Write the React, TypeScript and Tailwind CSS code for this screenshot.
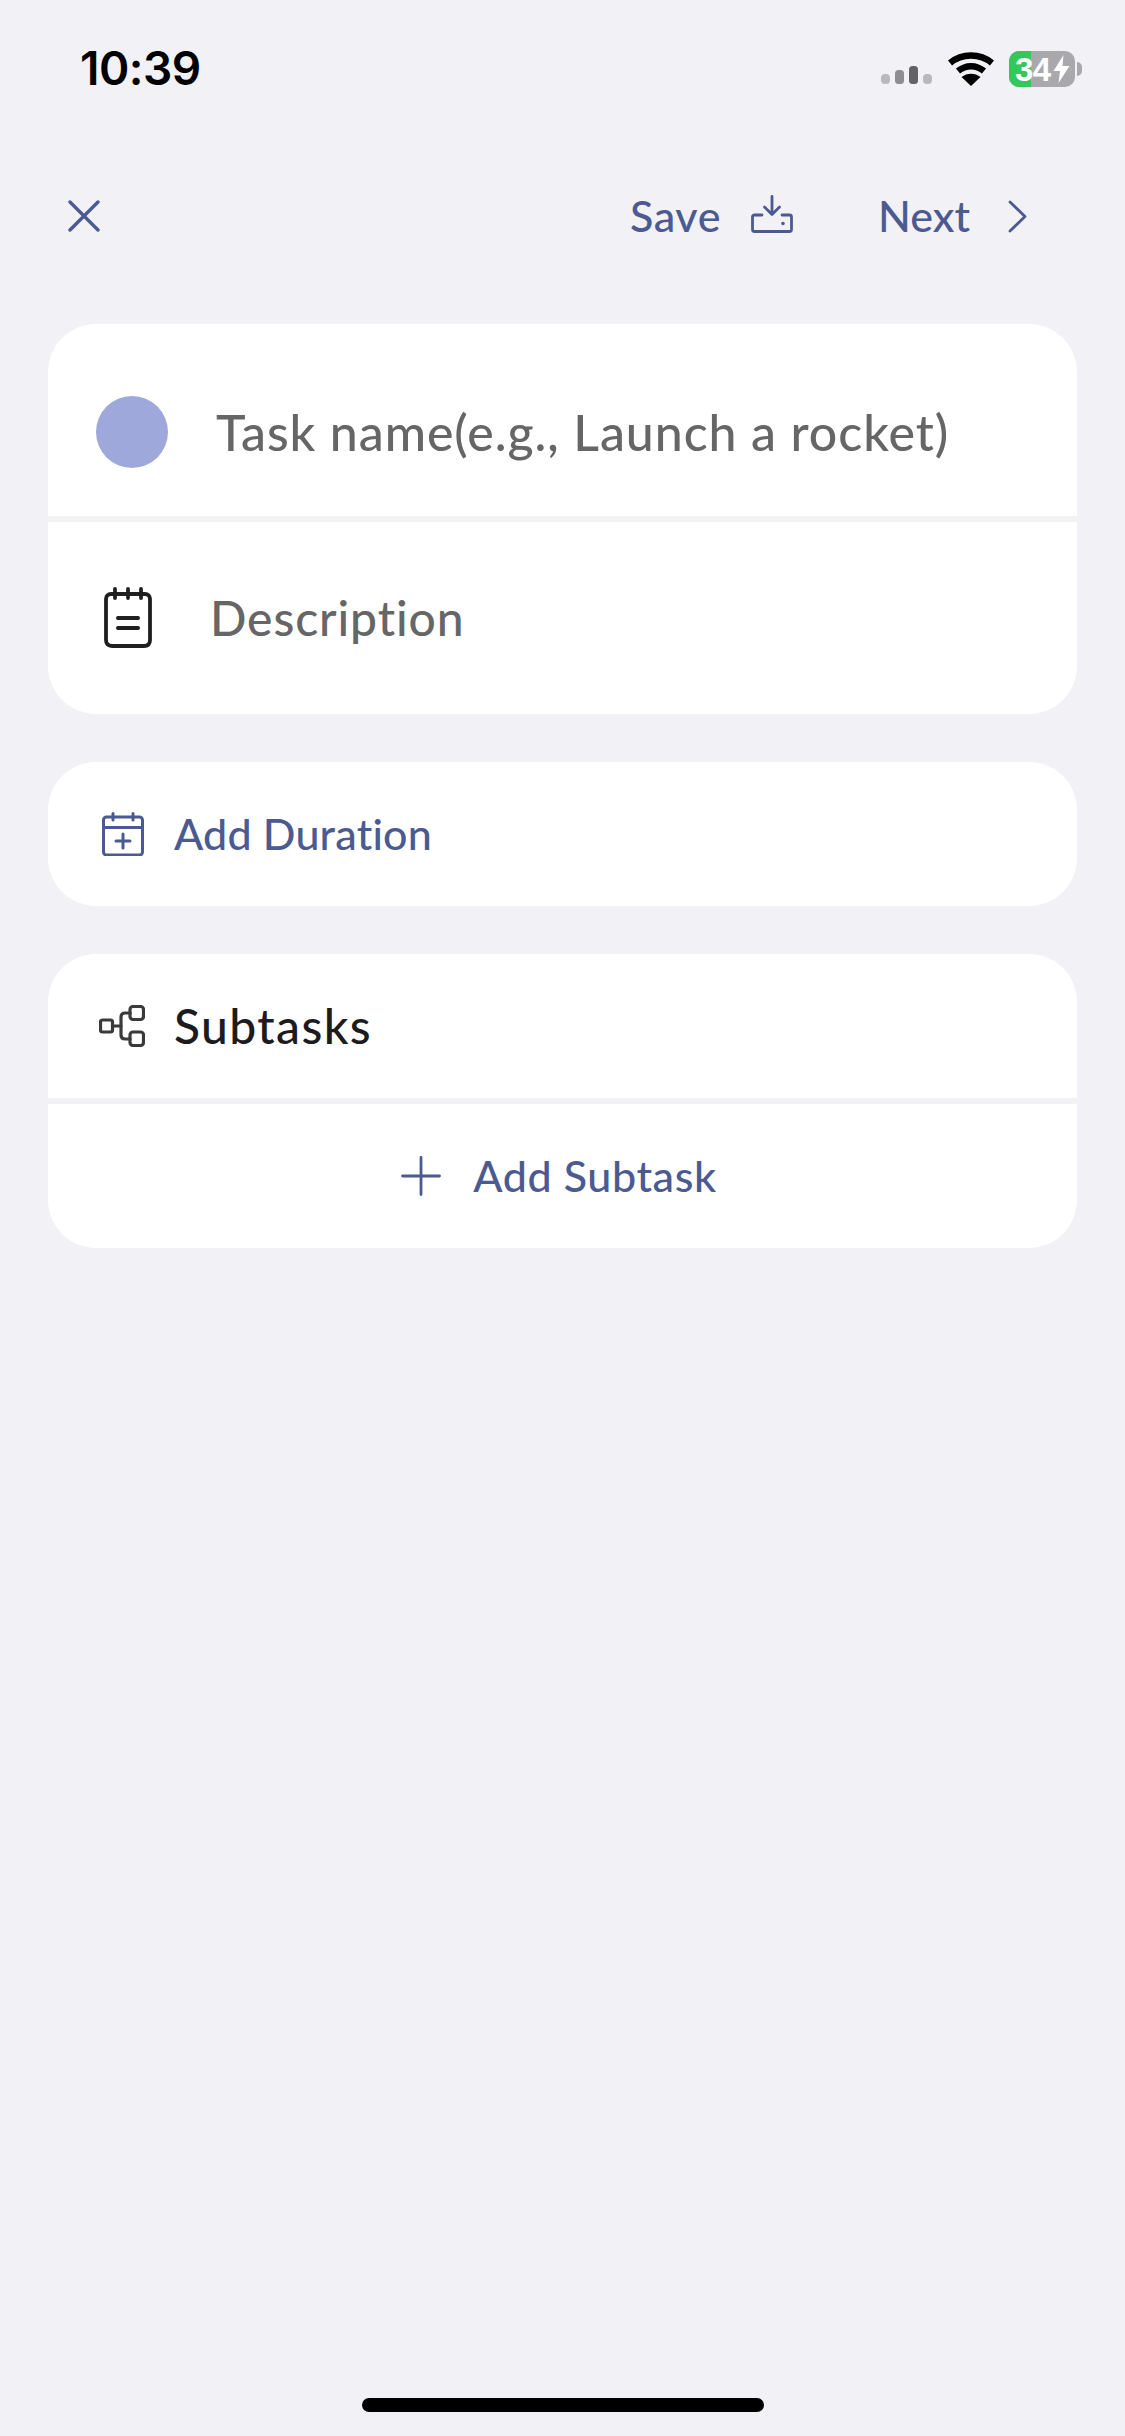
import React from "react";

const FONT = "font-['Lato','Noto_Sans',sans-serif]";

function Signal() {
  return (
    <svg width="52" height="20" viewBox="0 0 52 20" className="block">
      <rect x="0" y="8" width="9" height="10" rx="4" fill="#b9b9bd" />
      <rect x="14" y="4" width="9" height="14" rx="3.5" fill="#8e8e92" />
      <rect x="28" y="0" width="9" height="18" rx="3.5" fill="#636366" />
      <rect x="42" y="8" width="9" height="10" rx="4" fill="#b9b9bd" />
    </svg>
  );
}

function Wifi() {
  return (
    <svg width="46" height="34" viewBox="0 0 46 34" className="block">
      <path d="M2 11 C14 1 32 1 44 11" fill="none" stroke="#000" strokeWidth="6.5" />
      <path d="M10 19 C18 12.5 28 12.5 36 19" fill="none" stroke="#000" strokeWidth="6.5" />
      <path d="M23 34 L13.5 25 C19 20.5 27 20.5 32.5 25 Z" fill="#000" />
    </svg>
  );
}

function Battery() {
  return (
    <div className="flex items-center">
      <div className="relative flex h-[36px] w-[66px] items-center overflow-hidden rounded-[10px] bg-[#a9a9ad]">
        <div className="absolute inset-y-0 left-0 w-[22px] bg-[#34c759]" />
        <span className="relative ml-[6px] font-['Liberation_Sans',sans-serif] text-[33px] leading-none font-bold tracking-[-0.5px] text-white">
          34
        </span>
        <svg width="17" height="28" viewBox="0 0 16 28" className="relative ml-[2px] block">
          <path d="M10 0 L0 16 H6.5 L5 28 L16 11 H9 Z" fill="#fff" />
        </svg>
      </div>
      <div className="ml-[2px] h-[14px] w-[5px] rounded-r-full bg-[#a9a9ad]" />
    </div>
  );
}

function CloseIcon() {
  return (
    <svg width="32" height="32" viewBox="0 0 32 32" fill="none" stroke="#4c5a92" strokeWidth="3.4" strokeLinecap="round" className="block">
      <path d="M2 2 L30 30 M30 2 L2 30" />
    </svg>
  );
}

function SaveIcon() {
  return (
    <svg width="42" height="38" viewBox="0 0 42 38" fill="none" stroke="#4c5a92" strokeWidth="2.8" strokeLinecap="round" strokeLinejoin="round" className="block">
      <path d="M21 1.5 V19 M13.5 12 L21 19.5 L28.5 12" />
      <path d="M11 20 H3.5 C2.3 20 1.5 20.8 1.5 22 V34.5 C1.5 35.7 2.3 36.5 3.5 36.5 H38.5 C39.7 36.5 40.5 35.7 40.5 34.5 V22 C40.5 20.8 39.7 20 38.5 20 H31" />
      <circle cx="32" cy="28.5" r="1.8" fill="#4c5a92" stroke="none" />
    </svg>
  );
}

function ChevronIcon() {
  return (
    <svg width="19" height="33" viewBox="0 0 19 33" fill="none" stroke="#4c5a92" strokeWidth="2.8" strokeLinecap="round" strokeLinejoin="round" className="block">
      <path d="M2 2 L17 16.5 L2 31" />
    </svg>
  );
}

function NoteIcon() {
  return (
    <svg width="50" height="62" viewBox="0 0 50 62" fill="none" stroke="#1f1f1f" strokeWidth="3.8" strokeLinecap="round" strokeLinejoin="round" className="block">
      <path d="M8 7 H42 C45 7 47 9 47 12 V53 C47 57 45 59 41 59 H9 C5 59 3 57 3 53 V12 C3 9 5 7 8 7 Z" />
      <path d="M12 2 V11 M25 2 V11 M38 2 V11" />
      <path d="M15 31 H35 M15 41 H35" strokeWidth="4" />
    </svg>
  );
}

function CalendarIcon() {
  return (
    <svg width="42" height="44" viewBox="0 0 42 44" fill="none" stroke="#4c5a92" strokeWidth="3" strokeLinecap="round" strokeLinejoin="round" className="block">
      <rect x="1.5" y="5" width="39" height="38" rx="3" />
      <path d="M1.5 15.5 H40.5" />
      <path d="M11 1.5 V8 M31 1.5 V8" />
      <path d="M21 22 V36 M14 29 H28" />
    </svg>
  );
}

function SubtaskIcon() {
  return (
    <svg width="46" height="42" viewBox="0 0 46 42" fill="none" stroke="#3a3a3a" strokeWidth="3.2" strokeLinecap="round" strokeLinejoin="round" className="block">
      <rect x="1.5" y="15" width="12" height="12" rx="2" />
      <rect x="31" y="1.5" width="13.5" height="13" rx="3" />
      <rect x="31" y="27" width="13.5" height="13.5" rx="3" />
      <path d="M13.5 21 H22" />
      <path d="M31 8 H26 C23.5 8 22 9.5 22 12 V30 C22 32.5 23.5 34 26 34 H31" />
    </svg>
  );
}

function PlusIcon() {
  return (
    <svg width="40" height="40" viewBox="0 0 40 40" fill="none" stroke="#4c5a92" strokeWidth="2.8" strokeLinecap="round" className="block">
      <path d="M20 1.5 V38.5 M1.5 20 H38.5" />
    </svg>
  );
}

export default function App() {
  return (
    <div className={`relative flex h-[2436px] w-[1125px] flex-col overflow-hidden bg-[#f1f1f6] ${FONT}`}>
      <div className="flex h-[100px] items-start justify-between pt-[45px] pr-[43px] pl-[80px]">
        <span className="font-['Inter',sans-serif] text-[46px] leading-[46px] font-semibold tracking-[-0.5px] text-black">
          10:39
        </span>
        <div className="flex items-start pt-[6px]">
          <div className="mt-[15px] mr-[15px]"><Signal /></div>
          <div className="mt-[1px] mr-[15px]"><Wifi /></div>
          <Battery />
        </div>
      </div>

      <div className="flex h-[224px] items-start justify-between pr-[98px] pl-[68px]">
        <div className="mt-[91px] flex h-[50px] w-full items-center justify-between text-[43px] leading-[50px] font-medium text-[#4c5a92]">
          <CloseIcon />
          <div className="flex items-center">
            <span className="tracking-[0.6px]">Save</span>
            <span className="mr-[85px] ml-[30px] -mt-[5px]"><SaveIcon /></span>
            <span>Next</span>
            <span className="ml-[38px]"><ChevronIcon /></span>
          </div>
        </div>
      </div>

      <div className="flex flex-col gap-[48px] px-[48px]">
        <section className="overflow-hidden rounded-[48px] bg-white">
          <div className="flex h-[192px] items-center pt-[24px] pl-[48px]">
            <div className="h-[72px] w-[72px] rounded-full bg-[#9fa8da]" />
            <span className="ml-[48px] text-[50px] leading-[60px] font-medium tracking-[0.95px] text-[#666666]">Task name(e.g., Launch a rocket)</span>
          </div>
          <div className="h-[6px] bg-[#f2f2f5]" />
          <div className="flex h-[192px] items-center pl-[55px]">
            <NoteIcon />
            <span className="ml-[57px] text-[48px] leading-[60px] font-medium tracking-[0.9px] text-[#666666]">Description</span>
          </div>
        </section>

        <section className="flex h-[144px] items-center rounded-[48px] bg-white pl-[54px]">
          <CalendarIcon />
          <span className="ml-[30px] text-[43px] leading-[50px] font-medium tracking-[0.2px] text-[#4c5a92]">Add Duration</span>
        </section>

        <section className="overflow-hidden rounded-[48px] bg-white">
          <div className="flex h-[144px] items-center pl-[51px]">
            <SubtaskIcon />
            <span className="ml-[29px] text-[48px] leading-[56px] font-medium tracking-[1.4px] text-[#1c1c1e]">Subtasks</span>
          </div>
          <div className="h-[6px] bg-[#f2f2f5]" />
          <div className="flex h-[144px] items-center justify-center pr-[7px]">
            <PlusIcon />
            <span className="ml-[32px] text-[43px] leading-[50px] font-medium tracking-[0.6px] text-[#4c5a92]">Add Subtask</span>
          </div>
        </section>
      </div>

      <div className="absolute bottom-[24px] left-[362px] h-[14px] w-[402px] rounded-full bg-black" />
    </div>
  );
}
